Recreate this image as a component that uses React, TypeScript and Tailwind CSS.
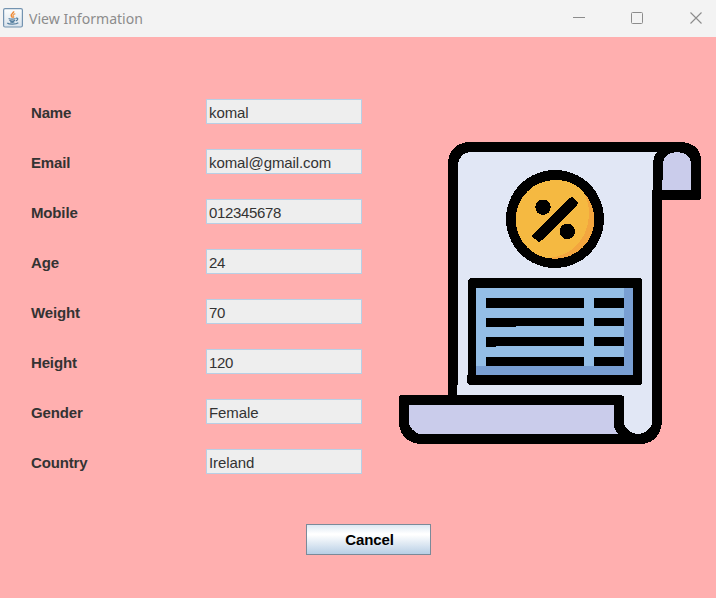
import React from "react";

const fields = [
  { label: "Name", value: "komal" },
  { label: "Email", value: "komal@gmail.com" },
  { label: "Mobile", value: "012345678", numeric: true },
  { label: "Age", value: "24", numeric: true },
  { label: "Weight", value: "70", numeric: true },
  { label: "Height", value: "120", numeric: true },
  { label: "Gender", value: "Female" },
  { label: "Country", value: "Ireland" },
];

function JavaIcon() {
  return (
    <svg width="20" height="20" viewBox="0 0 20 20" fill="none">
      <defs>
        <linearGradient id="tile" x1="0" y1="0" x2="0" y2="1">
          <stop offset="0" stopColor="#fdfefe" />
          <stop offset="1" stopColor="#d9e3ec" />
        </linearGradient>
      </defs>
      <rect x="0.6" y="0.6" width="18.8" height="18.4" rx="1.5" fill="url(#tile)" stroke="#7393b0" strokeWidth="1.2" />
      <path d="M10.6 3.2c.6 2-3.2 2.7-2.3 4.6.3.7 1 1.1 1.3 1.9" stroke="#ee8b38" strokeWidth="1.6" />
      <path d="M12.3 5.6c-2 .9-2.8 1.6-1.9 2.6.5.6.3 1.2-.3 1.7" stroke="#f2a057" strokeWidth="1.3" />
      <path d="M5.6 10.4c1.6.9 5.6.9 7 0M6.4 12.2c1.6.9 4.2.9 5.6 0M7.2 13.8c1.2.6 2.9.6 4.2 0M13 10.2c2.4-.5 2.4 2-.2 2.6" stroke="#557f9f" strokeWidth="1.2" />
      <path d="M4.3 15c1.4 1.5 8.9 1.6 11-.2" stroke="#557f9f" strokeWidth="1.2" />
    </svg>
  );
}

function TitleBar() {
  return (
    <header className="flex h-[37px] shrink-0 items-start bg-[#f3f3f3] pl-[3px]">
      <div className="mt-2">
        <JavaIcon />
      </div>
      <h1 className="mt-2 ml-1.5 font-['Noto_Sans','Open_Sans',sans-serif] text-[15px] leading-5 whitespace-nowrap text-[#8c8c8c]">
        <span className="inline-block origin-left scale-x-[0.937]">View Information</span>
      </h1>
      <div className="mt-[11px] mr-[13px] ml-auto flex text-[#8c8c8c]">
        <svg className="mr-11" width="14" height="14" fill="none" stroke="currentColor">
          <path d="M1 6.5h12" />
        </svg>
        <svg className="mr-[45px]" width="14" height="14" fill="none" stroke="currentColor">
          <rect x="1.5" y="1.5" width="11" height="11" rx="1" />
        </svg>
        <svg width="14" height="14" fill="none" stroke="currentColor" strokeWidth="1.1">
          <path d="M1.5 1.5l11 11M12.5 1.5l-11 11" />
        </svg>
      </div>
    </header>
  );
}

function Receipt() {
  return (
    <svg width="302" height="302" viewBox="399 142 302 302" shapeRendering="crispEdges">
      <path d="M468 142H682Q701 144 701 161V197Q701 200 698 200H662V422Q660 442 642 444H419Q401 441 399 424V397Q399 395 402 395H448V162Q450 144 468 142Z" fill="#000" />
      <path d="M470 152H657Q653 157 653 165V190H652V424C651 429 644 434 638 434S625 429 624 424V398Q624 395 620 395H457V385H458V164Q460 153 470 152Z" fill="#e1e7f5" />
      <path d="M663 180V162C664 156 670 152 677 152S690 156 691 162V190H662V180Z" fill="#cacceb" />
      <path d="M409 405H614V424Q614 430 618 434H419Q411 430 409 424Z" fill="#cacceb" />
      <circle cx="555" cy="219" r="49" />
      <circle cx="555" cy="219.5" r="39.3" fill="#f3a63f" />
      <path d="M584 193C594 211 589 238 571 250Q562 257 547 258C529 254 516 239 516 219C516 197 534 180 555 180Q574 180 584 193Z" fill="#f5b941" />
      <circle cx="543" cy="207.2" r="7.7" />
      <circle cx="567.3" cy="231.4" r="7.7" />
      <path d="M532.5 235L569.5 198.5Q571.5 196.5 573 197.5L577.5 202Q578 204 576.5 206L541 241Q539 242 538 241.5L532.5 237Q531.5 236 532.5 235Z" />
      <path d="M470 278H640L642 280V383L640 385H469L467 383V375H468V280Z" />
      <path d="M476 288H633V375H476Z" fill="#799fd3" />
      <path d="M476 288H624V366H476Z" fill="#94bee6" />
      <path d="M486 298H584V308H486ZM594 298H624V308H594ZM486 318H584V326H516V327H486ZM594 318H624V326H594ZM486 337H584V346H496V347H486ZM594 337H624V346H594ZM486 357H584V366H486ZM594 357H624V366H594Z" />
    </svg>
  );
}

export default function App() {
  return (
    <main className="flex h-[598px] w-[716px] flex-col overflow-hidden bg-[#ffafaf] font-['Liberation_Sans',Arial,sans-serif] text-[15px] text-[#333333]">
      <TitleBar />
      <div className="flex pl-[31px]">
        <section className="flex flex-col gap-[25px] pt-[62px]">
          {fields.map((field) => (
            <label key={field.label} className="flex h-[25px] items-center">
              <span className="w-[175px] pt-[3px] leading-[22px] font-bold tracking-[-0.15px]">{field.label}</span>
              <input
                readOnly
                value={field.value}
                className={`h-[25px] w-[156px] border border-[#b8cfe5] bg-[#eeeeee] px-0.5 pt-px leading-5 outline-none ${
                  field.numeric ? "tracking-[-0.35px]" : "tracking-[-0.1px]"
                }`}
              />
            </label>
          ))}
        </section>
        <div className="mt-[105px] ml-[37px]">
          <Receipt />
        </div>
      </div>
      <button className="mt-[50px] ml-[306px] flex h-[31px] w-[125px] items-center justify-center border border-[#7a8a99] bg-[linear-gradient(#dde8f3_0%,#ffffff_30%,#ffffff_34%,#b8cfe5_100%)] pt-0.5 pl-0.5 font-bold tracking-[-0.1px] text-black">
        Cancel
      </button>
    </main>
  );
}
